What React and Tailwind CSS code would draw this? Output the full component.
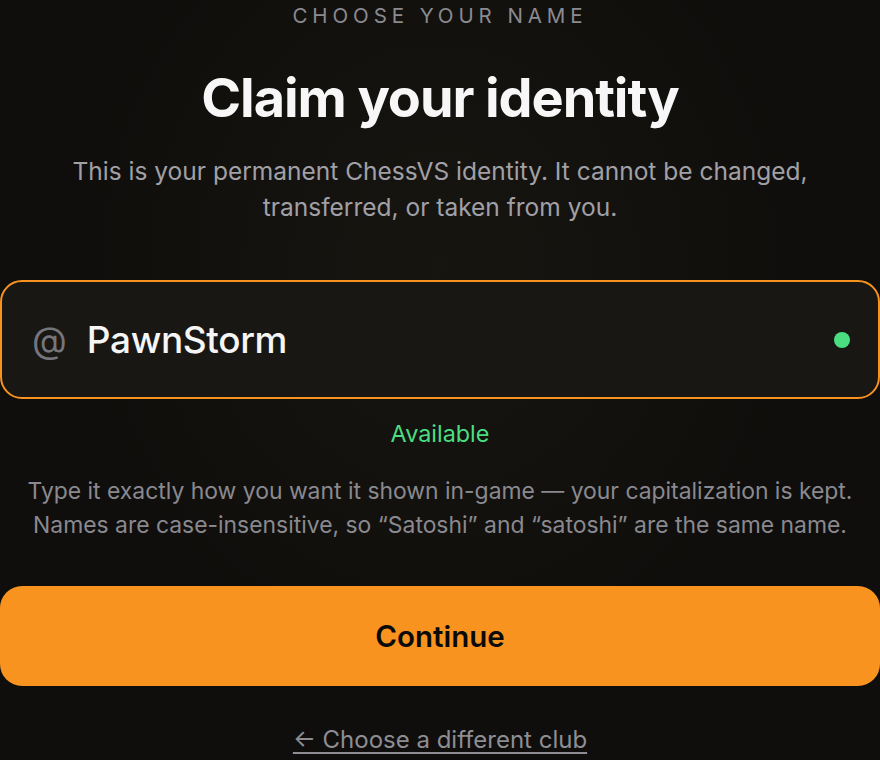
export default function App() {
  return (
    <div
      className="w-[880px] h-[760px] overflow-hidden bg-[#0f0e0c] flex flex-col items-center text-center"
      style={{ fontFamily: 'Inter, "Noto Sans", sans-serif', backgroundImage: 'radial-gradient(ellipse at 50% 35%, #171510 0%, #0f0e0c 60%)' }}
    >
      <div className="mt-[2px] text-[20.5px] leading-[28px] tracking-[0.24em] text-[#8b8a90] font-normal uppercase">
        Choose your name
      </div>
      <h1 className="mt-[36px] text-[54px] leading-[64px] font-bold tracking-[-0.02em] text-[#f7f7f7]">
        Claim your identity
      </h1>
      <p className="mt-[23px] text-[24.5px] leading-[36px] text-[#a1a0a6] w-[860px]">
        This is your permanent ChessVS identity. It cannot be changed,
        <br />
        transferred, or taken from you.
      </p>
      <div className="mt-[55px] w-[880px] h-[119px] rounded-[22px] border-2 border-[#f7931e] bg-[#181714] flex items-center pl-[30px] pr-[28px]">
        <span className="text-[36px] text-[#76757b] leading-none">@</span>
        <span className="ml-[20px] text-[37px] text-[#f5f5f5] font-medium leading-none tracking-[-0.01em]">PawnStorm</span>
        <span className="ml-auto w-[16px] h-[16px] rounded-full bg-[#4ade80]"></span>
      </div>
      <div className="mt-[20px] text-[23.4px] leading-[30px] text-[#4ade80]">Available</div>
      <p className="mt-[25px] text-[22.9px] leading-[34px] text-[#8a898f] w-[880px] whitespace-nowrap">
        Type it exactly how you want it shown in-game — your capitalization is kept.
        <br />
        Names are case-insensitive, so “Satoshi” and “satoshi” are the same name.
      </p>
      <button className="mt-[44px] w-[880px] h-[100px] rounded-[22px] bg-[#f7931e] text-[#0a0a0a] text-[29.5px] font-semibold">
        Continue
      </button>
      <a className="mt-[39px] text-[24px] leading-[30px] text-[#8e8d93] underline underline-offset-[4px] decoration-[2px]">
        ← Choose a different club
      </a>
    </div>
  );
}
